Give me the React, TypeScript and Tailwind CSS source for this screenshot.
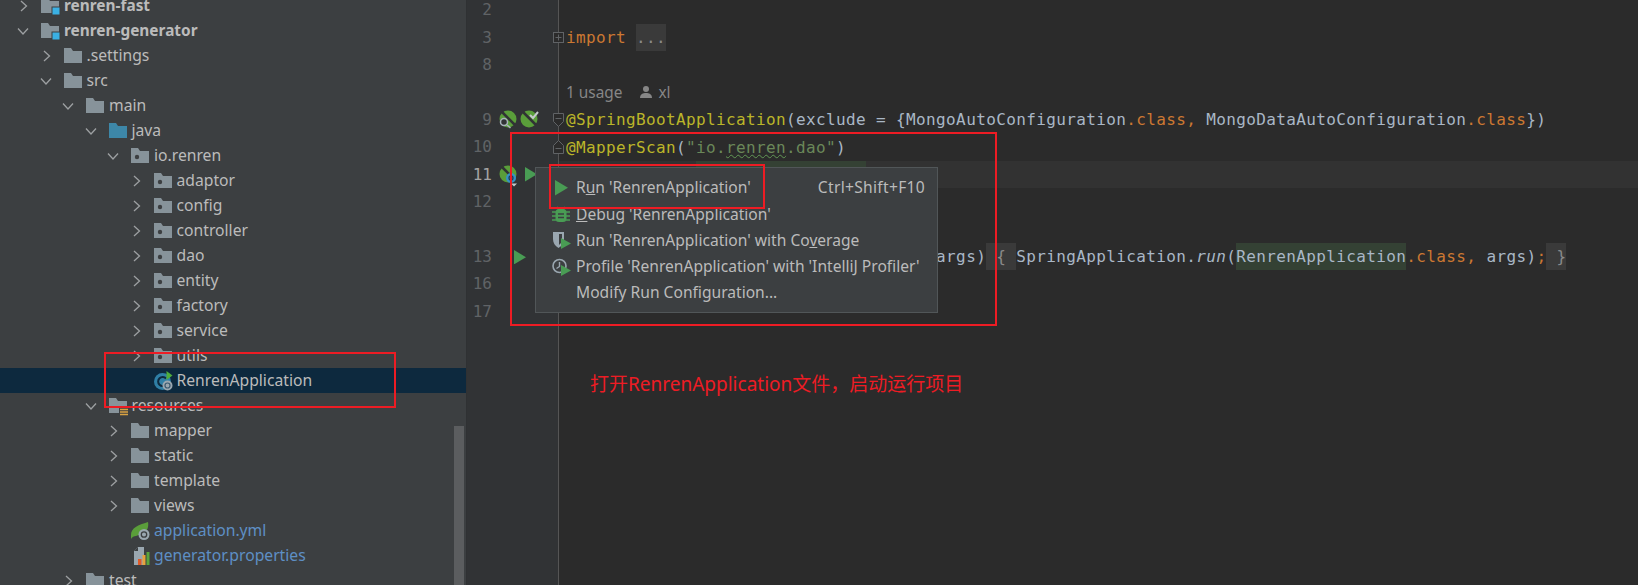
import type { ReactNode } from 'react'

const CODE = 'font-["DejaVu_Sans_Mono",monospace] text-[16px] tracking-[0.37px] whitespace-pre'
const UI_FONT = 'font-["Noto_Sans",sans-serif]'
const RED_BOX = 'absolute border-2 border-[#ed1c24] pointer-events-none'

type Kind = 'module' | 'folder' | 'source' | 'package' | 'res' | 'app' | 'yml' | 'props'

type Node = {
  name: string
  depth: number
  kind: Kind
  arrow?: 'open' | 'closed'
  bold?: boolean
  blue?: boolean
  selected?: boolean
}

const TREE: Node[] = [
  { name: 'renren-fast', depth: 0, kind: 'module', arrow: 'closed', bold: true },
  { name: 'renren-generator', depth: 0, kind: 'module', arrow: 'open', bold: true },
  { name: '.settings', depth: 1, kind: 'folder', arrow: 'closed' },
  { name: 'src', depth: 1, kind: 'folder', arrow: 'open' },
  { name: 'main', depth: 2, kind: 'folder', arrow: 'open' },
  { name: 'java', depth: 3, kind: 'source', arrow: 'open' },
  { name: 'io.renren', depth: 4, kind: 'package', arrow: 'open' },
  { name: 'adaptor', depth: 5, kind: 'package', arrow: 'closed' },
  { name: 'config', depth: 5, kind: 'package', arrow: 'closed' },
  { name: 'controller', depth: 5, kind: 'package', arrow: 'closed' },
  { name: 'dao', depth: 5, kind: 'package', arrow: 'closed' },
  { name: 'entity', depth: 5, kind: 'package', arrow: 'closed' },
  { name: 'factory', depth: 5, kind: 'package', arrow: 'closed' },
  { name: 'service', depth: 5, kind: 'package', arrow: 'closed' },
  { name: 'utils', depth: 5, kind: 'package', arrow: 'closed' },
  { name: 'RenrenApplication', depth: 5, kind: 'app', selected: true },
  { name: 'resources', depth: 3, kind: 'res', arrow: 'open' },
  { name: 'mapper', depth: 4, kind: 'folder', arrow: 'closed' },
  { name: 'static', depth: 4, kind: 'folder', arrow: 'closed' },
  { name: 'template', depth: 4, kind: 'folder', arrow: 'closed' },
  { name: 'views', depth: 4, kind: 'folder', arrow: 'closed' },
  { name: 'application.yml', depth: 4, kind: 'yml', blue: true },
  { name: 'generator.properties', depth: 4, kind: 'props', blue: true },
  { name: 'test', depth: 2, kind: 'folder', arrow: 'closed' },
]

const FOLDER_PATH = 'M0 1h7l2 3h9v12H0z'

function TreeIcon({ kind }: { kind: Kind }) {
  if (kind === 'app') {
    return (
      <svg width="20" height="20" viewBox="0 0 20 20" className="shrink-0">
        <circle cx="8.500" cy="10.500" r="8.500" fill="#2f7fa6" />
        <path d="M12 7.500a4.500 4.500 0 1 0 0 6" fill="none" stroke="#0d293e" strokeWidth="2" />
        <path d="M12.500 0v9l6-4.500z" fill="#4fae3c" />
        <circle cx="13.500" cy="14.500" r="5" fill="#9aa7b0" />
        <circle cx="13.500" cy="14.500" r="2.500" fill="none" stroke="#3c5a70" strokeWidth="1.200" />
      </svg>
    )
  }
  if (kind === 'yml') {
    return (
      <svg width="20" height="20" viewBox="0 0 20 20" className="shrink-0">
        <path d="M0 14C0 7 7 4 17 1c1 5-1 9-4 11l-8 3c-2 0-4 1-5 3z" fill="#5a9e3a" />
        <circle cx="13" cy="13.500" r="5.500" fill="#9aa7b0" />
        <circle cx="13" cy="13.500" r="2.700" fill="none" stroke="#3c3f41" strokeWidth="1.300" />
      </svg>
    )
  }
  if (kind === 'props') {
    return (
      <svg width="20" height="20" viewBox="0 0 20 20" className="shrink-0">
        <path d="M3 5l4-4h6v18H3z" fill="#9aa7b0" />
        <path d="M7 1v4H3z" fill="#3c3f41" />
        <rect x="7" y="13" width="3.500" height="6" fill="#e05a28" />
        <rect x="11.500" y="9" width="3" height="10" fill="#e8a33d" />
        <rect x="15.500" y="6" width="3" height="13" fill="#5aa43c" />
      </svg>
    )
  }
  const fill = kind === 'source' ? '#3d87a8' : '#87939a'
  return (
    <svg width="20" height="20" viewBox="0 0 20 20" className="shrink-0 overflow-visible">
      <path d={FOLDER_PATH} fill={fill} transform="translate(0 1)" />
      {kind === 'package' && <circle cx="6" cy="11" r="2.200" fill="#3c3f41" />}
      {kind === 'module' && <rect x="11" y="11" width="8" height="8" fill="#3bb0e3" stroke="#3c3f41" strokeWidth="1" />}
      {kind === 'res' && (
        <g>
          <rect x="10" y="11" width="9" height="9" fill="#3c3f41" />
          <path d="M11 13.500h8M11 16h8M11 18.500h8" stroke="#d9a343" strokeWidth="1.300" />
        </g>
      )}
    </svg>
  )
}

function TreeRow({ node }: { node: Node }) {
  return (
    <div
      className={`flex h-[25px] items-center shrink-0 ${node.selected ? 'bg-[#0d293e]' : ''}`}
      style={{ paddingLeft: 16 + node.depth * 22.5 }}
    >
      <span className="w-[25px] shrink-0 flex items-center">
        {node.arrow === 'closed' && (
          <svg width="14" height="14" viewBox="0 0 14 14">
            <path d="M5 2l5.500 5L5 12" fill="none" stroke="#9da0a2" strokeWidth="1.300" />
          </svg>
        )}
        {node.arrow === 'open' && (
          <svg width="14" height="14" viewBox="0 0 14 14">
            <path d="M2 4.500l5 5.500 5-5.500" fill="none" stroke="#9da0a2" strokeWidth="1.300" />
          </svg>
        )}
      </span>
      <TreeIcon kind={node.kind} />
      <span
        className={`ml-[3px] leading-[25px] whitespace-nowrap ${UI_FONT} ${node.bold ? 'font-bold text-[15.400px]' : 'text-[15.700px]'} ${
          node.blue ? 'text-[#5e8fc5]' : 'text-[#bbbbbb]'
        }`}
      >
        {node.name}
      </span>
    </div>
  )
}

function Sidebar() {
  return (
    <aside className="relative w-[467px] shrink-0 h-full bg-[#3c3f41] overflow-hidden border-r border-[#2f3133]">
      <div className="flex flex-col mt-[-7px]">
        {TREE.map(n => (
          <TreeRow key={n.name} node={n} />
        ))}
      </div>
      <div className="absolute right-[2px] top-[426px] bottom-0 w-[10px] bg-[#5b5d5f]" />
    </aside>
  )
}

function Play({ size = 12, className = '' }: { size?: number; className?: string }) {
  return (
    <svg width={size} height={size * 1.2} viewBox="0 0 10 12" className={`shrink-0 ${className}`}>
      <path d="M0 0l10 6-10 6z" fill="#499c54" />
    </svg>
  )
}

function SpringBadge({ overlay }: { overlay: 'search' | 'check' | 'at' }) {
  return (
    <svg width="20" height="20" viewBox="0 0 20 20" className="shrink-0 overflow-visible">
      <circle cx="9" cy="9" r="8.500" fill="#5a9e3a" />
      <path d="M3 2l13 13" stroke="#313335" strokeWidth="2.500" />
      {overlay === 'search' && (
        <g fill="none" stroke="#a9b4bb" strokeWidth="1.500">
          <circle cx="5" cy="12" r="3.500" fill="#313335" />
          <path d="M8 15l3.500 3" />
        </g>
      )}
      {overlay === 'check' && <path d="M10 5l3 3 5-6" fill="none" stroke="#c4c9cc" strokeWidth="2" />}
      {overlay === 'at' && (
        <g>
          <circle cx="12" cy="13" r="5" fill="#3592c4" />
          <circle cx="12" cy="13" r="2" fill="none" stroke="#1c3f55" strokeWidth="1.300" />
          <path d="M12 18.500h6l-3 3z" fill="#c4c9cc" />
        </g>
      )}
    </svg>
  )
}

function Gutter({ num, active, children }: { num?: string; active?: boolean; children?: ReactNode }) {
  return (
    <div className="flex w-[92px] shrink-0 h-full items-center bg-[#313335] border-r border-[#555555]">
      <span className={`w-[25px] shrink-0 text-right ${CODE} tracking-normal ${active ? 'text-[#a4a3a3]' : 'text-[#606366]'}`}>{num}</span>
      <div className="flex items-center ml-[7px] gap-[1px]">{children}</div>
    </div>
  )
}

function Fold({ dir }: { dir: 'plus' | 'down' | 'up' }) {
  return (
    <svg width="14" height="18" viewBox="0 0 14 18" className="absolute left-[-7px] top-[5px] bg-transparent">
      {dir === 'plus' && (
        <g fill="#2b2b2b" stroke="#606366">
          <rect x="1.500" y="3.500" width="10" height="10" />
          <path d="M3.500 8.500h6M6.500 5.500v6" />
        </g>
      )}
      {dir === 'down' && (
        <g fill="#2b2b2b" stroke="#606366">
          <path d="M1.500 2.500h10v8l-5 5-5-5z" />
          <path d="M3.500 7.500h6" />
        </g>
      )}
      {dir === 'up' && (
        <g fill="#2b2b2b" stroke="#606366">
          <path d="M1.500 14.500h10v-8l-5-5-5 5z" />
          <path d="M3.500 9.500h6" />
        </g>
      )}
    </svg>
  )
}

function Line({ num, active, gutter, fold, children }: { num?: string; active?: boolean; gutter?: ReactNode; fold?: 'plus' | 'down' | 'up'; children?: ReactNode }) {
  return (
    <div className="flex h-[27.420px] shrink-0">
      <Gutter num={num} active={active}>{gutter}</Gutter>
      <div className={`relative flex-1 flex items-center pl-[7px] ${CODE} text-[#a9b7c6] ${active ? 'bg-[#323232]' : ''}`}>
        {fold && <Fold dir={fold} />}
        <span className="leading-[27px]">{children}</span>
      </div>
    </div>
  )
}

const KW = 'text-[#cc7832]'
const ANN = 'text-[#bbb529]'

function Popup() {
  const rows: { icon: ReactNode; label: ReactNode; shortcut?: string }[] = [
    { icon: <Play size={13} className="ml-[3px]" />, label: <>R<span className="underline">u</span>n 'RenrenApplication'</>, shortcut: 'Ctrl+Shift+F10' },
    {
      icon: (
        <svg width="18" height="18" viewBox="0 0 18 18">
          <path d="M5 2l2 3h4l2-3M0 7h4M14 7h4M0 11h4M14 11h4M0 15h4M14 15h4" stroke="#499c54" strokeWidth="1.500" fill="none" />
          <rect x="3.500" y="4" width="11" height="13" rx="3.500" fill="#499c54" />
          <path d="M6 9h6M6 12.500h6" stroke="#3c3f41" strokeWidth="1.500" />
        </svg>
      ),
      label: <><span className="underline">D</span>ebug 'RenrenApplication'</>,
    },
    {
      icon: (
        <svg width="18" height="18" viewBox="0 0 18 18" className="overflow-visible">
          <path d="M1 1h11v7c0 4-2 7-5.500 9C3 15 1 12 1 8z" fill="#9aa7b0" />
          <path d="M7 3h3v8l-3 3z" fill="#3c3f41" />
          <path d="M9 7l10 5.500L9 18z" fill="#499c54" />
        </svg>
      ),
      label: <>Run 'RenrenApplication' with Co<span className="underline">v</span>erage</>,
    },
    {
      icon: (
        <svg width="18" height="18" viewBox="0 0 18 18" className="overflow-visible">
          <circle cx="7.500" cy="8" r="6.500" fill="none" stroke="#9aa7b0" strokeWidth="1.600" />
          <path d="M7.500 4v4.500l-3 2" fill="none" stroke="#9aa7b0" strokeWidth="1.400" />
          <path d="M9 7l10 5.500L9 18z" fill="#499c54" />
        </svg>
      ),
      label: <>Profile 'RenrenApplication' with 'IntelliJ Profiler'</>,
    },
    { icon: null, label: <>Modify Run Configuration...</> },
  ]
  return (
    <div className={`absolute left-[535px] top-[167px] w-[403px] h-[146px] flex flex-col pt-[7px] bg-[#3c3f41] border border-[#515658] ${UI_FONT} text-[15.600px] text-[#bbbbbb]`}>
      {rows.map((r, i) => (
        <div key={i} className="flex items-center h-[26.200px] shrink-0 pl-[16px] pr-[12px]">
          <span className="w-[24px] shrink-0 flex items-center">{r.icon}</span>
          <span className="whitespace-nowrap">{r.label}</span>
          {r.shortcut && <span className="ml-auto whitespace-nowrap tracking-[0.3px]">{r.shortcut}</span>}
        </div>
      ))}
    </div>
  )
}

function Editor() {
  return (
    <main className="flex flex-col flex-1 h-full bg-[#2b2b2b] overflow-hidden">
      <div className="flex flex-col flex-1 mt-[-3.500px]">
        <Line num="2" />
        <Line num="3" fold="plus">
          <span className={KW}>import</span> <span className="inline-block bg-[#3a3a3a] text-[#8a8a8a]">...</span>
        </Line>
        <Line num="8" />
        <Line>
          <span className={`${UI_FONT} text-[15.400px] tracking-normal text-[#868686] inline-flex items-center`}>
            1 usage
            <svg width="14" height="14" viewBox="0 0 14 14" className="ml-[17px] mr-[5px]">
              <circle cx="7" cy="4" r="3" fill="#868686" />
              <path d="M1 13c0-4 3-5 6-5s6 1 6 5z" fill="#868686" />
            </svg>
            xl
          </span>
        </Line>
        <Line
          num="9"
          fold="down"
          gutter={
            <>
              <SpringBadge overlay="search" />
              <SpringBadge overlay="check" />
            </>
          }
        >
          <span className={ANN}>@SpringBootApplication</span>(exclude = {'{'}MongoAutoConfiguration<span className={KW}>.class,</span> MongoDataAutoConfiguration<span className={KW}>.class</span>{'})'}
        </Line>
        <Line num="10" fold="up">
          <span className={ANN}>@MapperScan</span>(<span className="text-[#6a8759]">"io.<span className="underline decoration-wavy decoration-[#629755] decoration-1">renren</span>.dao"</span>)
        </Line>
        <Line
          num="11"
          active
          gutter={
            <>
              <SpringBadge overlay="at" />
              <Play size={12} className="ml-[5px]" />
            </>
          }
        >
          <span className={KW}>public class </span><span className="inline-block bg-[#344134]">RenrenApplication</span> {'{'}
        </Line>
        <Line num="12" />
        <Line />
        <Line num="13" gutter={<Play size={12} className="ml-[15px]" />}>
          {'    '}<span className={KW}>public static void </span>main(String[] args)<span className="inline-block bg-[#3a3a3a] text-[#8a8a8a]"> {'{'} </span>SpringApplication.<span className="italic">run</span>(<span className="inline-block bg-[#344134]">RenrenApplication</span><span className={KW}>.class,</span> args)<span className={KW}>;</span><span className="inline-block bg-[#3a3a3a] text-[#8a8a8a]"> {'}'}</span>
        </Line>
        <Line num="16" />
        <Line num="17" />
        <div className="flex flex-1">
          <div className="w-[92px] shrink-0 bg-[#313335] border-r border-[#555555]" />
        </div>
      </div>
    </main>
  )
}

export default function App() {
  return (
    <div className="relative flex w-[1638px] h-[585px] overflow-hidden bg-[#2b2b2b]">
      <Sidebar />
      <Editor />
      <Popup />
      <div className={`${RED_BOX} left-[104px] top-[352px] w-[292px] h-[56px]`} />
      <div className={`${RED_BOX} left-[510px] top-[132px] w-[487px] h-[194px]`} />
      <div className={`${RED_BOX} left-[549px] top-[164px] w-[216px] h-[45px]`} />
      <div className='absolute left-[590px] top-[371px] text-[19px] leading-[26px] text-[#ed1c24] font-["Noto_Sans","Noto_Sans_CJK_SC",sans-serif] whitespace-nowrap'>
        打开RenrenApplication文件{'\uFF0C'}启动运行项目
      </div>
    </div>
  )
}
